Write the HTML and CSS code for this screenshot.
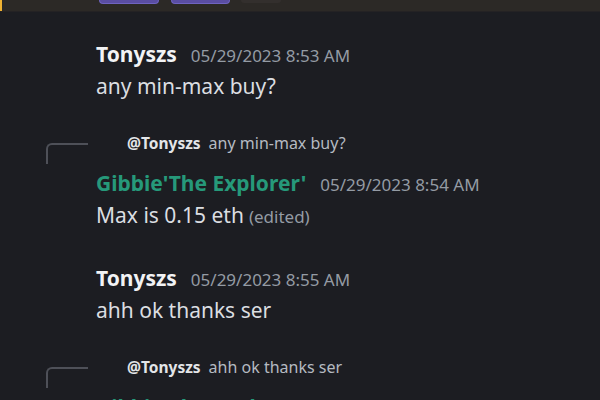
FILE: index.html
```html
<!DOCTYPE html>
<html>
<head>
<meta charset="utf-8">
<link rel="stylesheet" href="styles.css">
</head>
<body>
<div class="topbar">
  <span class="edge"></span>
  <span class="pill pill-a"></span>
  <span class="pill pill-b"></span>
  <span class="pill pill-c"></span>
</div>
<main class="chat">
  <section class="group">
    <div class="header"><span class="name">Tonyszs</span><span class="time">05/29/2023 8:53 AM</span></div>
    <div class="content">any min-max buy?</div>
  </section>
  <section class="group group-reply">
    <div class="reply"><span class="spine"></span><span class="reply-name">@Tonyszs</span><span class="reply-text">any min-max buy?</span></div>
    <div class="header"><span class="name green">Gibbie'The Explorer'</span><span class="time">05/29/2023 8:54 AM</span></div>
    <div class="content">Max is 0.15 eth<span class="edited">(edited)</span></div>
  </section>
  <section class="group">
    <div class="header"><span class="name">Tonyszs</span><span class="time">05/29/2023 8:55 AM</span></div>
    <div class="content">ahh ok thanks ser</div>
  </section>
  <section class="group group-reply">
    <div class="reply"><span class="spine"></span><span class="reply-name">@Tonyszs</span><span class="reply-text">ahh ok thanks ser</span></div>
    <div class="header"><span class="name green">Gibbie'The Explorer'</span><span class="time">05/29/2023 8:56 AM</span></div>
    <div class="content">ok</div>
  </section>
</main>
</body>
</html>
```
FILE: styles.css
```css
html, body {
  margin: 0;
  padding: 0;
  background: #1c1d22;
  height: 100%;
  overflow: hidden;
}
body {
  font-family: "Noto Sans", "Open Sans", sans-serif;
  color: #dbdee1;
}
.topbar {
  height: 11px;
  background: #2c2926;
  border-bottom: 1px solid #242224;
  display: flex;
  align-items: flex-start;
  overflow: hidden;
}
.edge {
  width: 2px;
  height: 11px;
  background: #f0b232;
}
.pill {
  height: 3px;
  border-radius: 0 0 8px 8px;
  background: #5a4da2;
  box-shadow: 0 0 0 1px #6f63c0;
}
.pill-a { width: 58px; margin-left: 98px; }
.pill-b { width: 57px; margin-left: 14px; }
.pill-c { width: 40px; margin-left: 12px; background: #332f2d; box-shadow: none; }
.chat {
  padding-left: 96px;
}
.group {
  margin-top: 31px;
}
.group:first-child {
  margin-top: 28px;
}
.group-reply {
  margin-top: 29px;
}
.header {
  height: 28px;
  line-height: 28px;
  display: flex;
  align-items: baseline;
  white-space: nowrap;
}
.name {
  font-size: 21px;
  font-weight: 700;
  color: #f2f3f5;
}
.name.green {
  color: #26997a;
}
.time {
  font-size: 17px;
  color: #949ba4;
  margin-left: 14px;
}
.content {
  height: 36px;
  line-height: 36px;
  font-size: 21px;
  color: #dbdee1;
  white-space: nowrap;
}
.edited {
  font-size: 17px;
  color: #949ba4;
  margin-left: 5px;
}
.reply {
  height: 20px;
  line-height: 20px;
  margin-left: -50px;
  margin-bottom: 16px;
  display: flex;
  align-items: flex-start;
  white-space: nowrap;
}
.spine {
  width: 42px;
  height: 21px;
  margin-top: 10px;
  border-top: 2px solid #4e5058;
  border-left: 2px solid #4e5058;
  border-top-left-radius: 6px;
  box-sizing: border-box;
  margin-right: 39px;
}
.reply-name {
  font-size: 15.5px;
  font-weight: 700;
  color: #e3e5e8;
  margin-right: 8px;
}
.reply-text {
  font-size: 16px;
  color: #b5bac1;
}
```
